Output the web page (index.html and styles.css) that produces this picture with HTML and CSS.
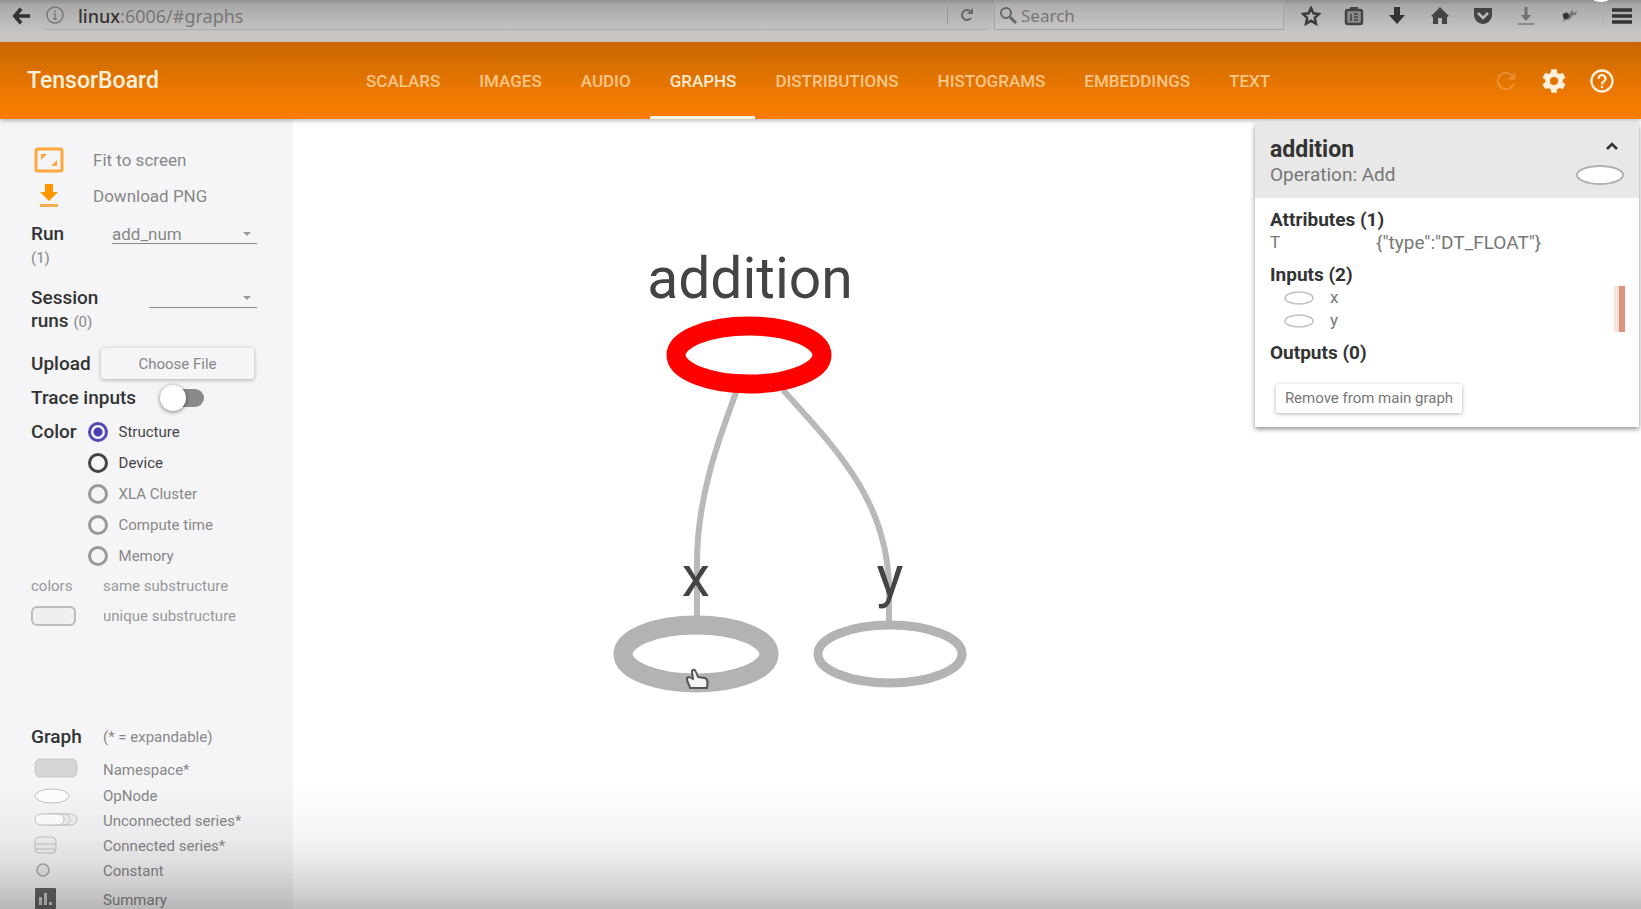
FILE: index.html
```html
<!DOCTYPE html>
<html lang="en">
<head>
<meta charset="utf-8">
<title>TensorBoard</title>
<link rel="stylesheet" href="styles.css">
</head>
<body>
<div class="browser">
  <button class="back" aria-label="Back"><svg width="20" height="18" viewBox="0 0 22 20"><path d="M10 2 3 10l7 8M4 10h16" fill="none" stroke="#333" stroke-width="4"/></svg></button>
  <div class="address">
    <svg width="18" height="18" viewBox="0 0 18 18" fill="none" stroke="#777" stroke-width="1.5"><circle cx="9" cy="9" r="8"/><path d="M9 8v5M7 13h4M7.500 8H9M9 4.500v2"/></svg>
    <span class="url" role="textbox" aria-label="Address"><b>linux</b>:6006/#graphs</span>
    <button class="reload" aria-label="Reload"><svg width="14" height="16" viewBox="0 0 14 16"><path d="M11 11a5 5 0 1 1-1-7" fill="none" stroke="#666" stroke-width="2"/><path d="M13 1v6H7z" fill="#666"/></svg></button>
  </div>
  <label class="search">
    <svg width="18" height="18" viewBox="0 0 18 18" fill="none" stroke="#666" stroke-width="2"><circle cx="7" cy="7" r="5"/><path d="m11 11 6 6" stroke-width="3"/></svg>
    <input type="text" placeholder="Search" aria-label="Search">
  </label>
  <div class="tools">
    <button aria-label="Bookmark"><svg width="20" height="20" viewBox="0 0 20 20"><path d="m10 2 2.400 5.300 5.600.7-4.200 3.900 1.200 5.800-5-2.900-5 2.900 1.200-5.800L2 8l5.600-.7z" fill="none" stroke="#3c3c3c" stroke-width="2.500"/></svg></button>
    <button aria-label="Clipboard"><svg width="20" height="20" viewBox="0 0 20 20"><rect x="2" y="4" width="16" height="14" rx="2" fill="#8a8a8a" stroke="#444" stroke-width="2.500"/><rect x="6" y="1" width="8" height="4" fill="#444"/><path d="M7 8v7M10 8h4M10 11h4M10 14h4" stroke="#444" stroke-width="1.500"/></svg></button>
    <button aria-label="Downloads"><svg width="20" height="20" viewBox="0 0 20 20"><path d="M7 1h6v8h5l-8 9-8-9h5z" fill="#333"/></svg></button>
    <button aria-label="Home"><svg width="20" height="20" viewBox="0 0 20 20"><path d="m10 1 9 9-2 1v7h-5v-6H8v6H3v-7l-2-1z" fill="#444"/></svg></button>
    <button aria-label="Pocket"><svg width="20" height="20" viewBox="0 0 20 20"><path d="M1 2h18v7a9 9 0 0 1-18 0z" fill="#444"/><path d="m5 7 5 5 5-5" fill="none" stroke="#bbb" stroke-width="2.500"/></svg></button>
    <button aria-label="Save"><svg width="20" height="20" viewBox="0 0 20 20"><path d="M8.500 1h3v8H15l-5 6-5-6h3.500z" fill="#707070"/><path d="M2 17h16v2H2z" fill="#8c8c8c"/></svg></button>
    <button aria-label="Extension"><svg width="20" height="20" viewBox="0 0 20 20"><path d="m3 8 5-2 2 2 4-5v4l4-2-1 4h-3l-3 4-4 1-3 2 1-4z" fill="#777"/><circle cx="7" cy="10" r="3" fill="#333"/></svg></button>
    <button class="menu" aria-label="Menu"><svg width="20" height="20" viewBox="0 0 20 20"><path d="M0 4h20M0 10h20M0 16h20" stroke="#333" stroke-width="3.500"/></svg></button>
  </div>
</div>

<header class="bar">
  <h1 class="brand">TensorBoard</h1>
  <nav class="tabs">
    <a href="#scalars">SCALARS</a><a href="#images">IMAGES</a><a href="#audio">AUDIO</a><a href="#graphs" class="on" aria-current="page">GRAPHS</a><a href="#distributions">DISTRIBUTIONS</a><a href="#histograms">HISTOGRAMS</a><a href="#embeddings">EMBEDDINGS</a><a href="#text">TEXT</a>
  </nav>
  <div class="actions">
    <button class="dim" aria-label="Reload data"><svg width="28" height="28" viewBox="0 0 24 24" fill="currentColor"><path d="M17.650 6.350A7.960 7.960 0 0 0 12 4a8 8 0 1 0 7.730 10h-2.080A6 6 0 1 1 12 6c1.660 0 3.140.69 4.220 1.780L13 11h7V4z"/></svg></button>
    <button aria-label="Settings"><svg width="28" height="28" viewBox="0 0 24 24" fill="currentColor"><path d="M19.430 12.980c.04-.32.07-.64.07-.98s-.03-.66-.07-.98l2.110-1.650c.19-.15.24-.42.12-.64l-2-3.460c-.12-.22-.39-.3-.61-.22l-2.490 1c-.52-.4-1.080-.73-1.690-.98l-.38-2.650A.49.49 0 0 0 14 2h-4c-.25 0-.46.18-.49.42l-.38 2.650c-.61.25-1.170.59-1.690.98l-2.490-1c-.23-.09-.49 0-.61.22l-2 3.460c-.13.22-.07.49.12.64l2.110 1.650c-.04.32-.07.65-.07.98s.03.66.07.98l-2.110 1.650c-.19.15-.24.42-.12.64l2 3.460c.12.22.39.3.61.22l2.490-1c.52.4 1.080.73 1.690.98l.38 2.650c.03.24.24.42.49.42h4c.25 0 .46-.18.49-.42l.38-2.650c.61-.25 1.170-.59 1.690-.98l2.490 1c.23.09.49 0 .61-.22l2-3.460c.12-.22.07-.49-.12-.64zM12 15.500a3.500 3.500 0 1 1 0-7 3.500 3.500 0 0 1 0 7z"/></svg></button>
    <button aria-label="Help"><svg width="28" height="28" viewBox="0 0 24 24" fill="currentColor"><path d="M11 18h2v-2h-2zm1-16a10 10 0 1 0 0 20 10 10 0 0 0 0-20zm0 18a8 8 0 1 1 0-16 8 8 0 0 1 0 16zm0-14a4 4 0 0 0-4 4h2a2 2 0 1 1 4 0c0 2-3 1.750-3 5h2c0-2.250 3-2.500 3-5a4 4 0 0 0-4-4z"/></svg></button>
  </div>
</header>

<div class="main">
  <aside class="side">
    <button class="action"><svg width="32" height="30" viewBox="0 0 32 30" fill="none" stroke="#ffa63c"><rect x="3" y="4" width="26" height="22" rx="2" stroke-width="3"/><path d="m8 9 6 0-6 6zM24 21l-6 0 6-6z" fill="#ffa63c" stroke="none"/></svg>Fit to screen</button>
    <button class="action"><svg width="32" height="30" viewBox="0 0 32 30" fill="#ff9800"><path d="M12 3h8v8h5l-9 9-9-9h5z"/><path d="M7 23h18v3H7z" fill="#f3ac50"/></svg>Download PNG</button>

    <div class="field run">
      <label for="run">Run<small>(1)</small></label>
      <span class="drop"><select id="run"><option>add_num</option></select></span>
    </div>
    <div class="field session">
      <label for="session">Session<br>runs <small>(0)</small></label>
      <span class="drop"><select id="session"><option></option></select></span>
    </div>
    <div class="field upload"><span id="upl">Upload</span><button class="choose" aria-describedby="upl">Choose File</button></div>
    <div class="field trace"><label for="trace">Trace inputs</label><input type="checkbox" role="switch" id="trace" class="switch"></div>
    <div class="field color" role="radiogroup" aria-labelledby="colorby">
      <span id="colorby">Color</span>
      <div class="radios">
        <label class="dark"><input type="radio" name="color" checked>Structure</label>
        <label class="dark"><input type="radio" name="color">Device</label>
        <label><input type="radio" name="color">XLA Cluster</label>
        <label><input type="radio" name="color">Compute time</label>
        <label><input type="radio" name="color">Memory</label>
      </div>
    </div>
    <div class="keys">
      <span>colors</span><span>same substructure</span>
      <span class="pill"></span><span>unique substructure</span>
    </div>

    <div class="legend">
      <h2>Graph</h2><span>(* = expandable)</span>
      <svg width="48" height="24" viewBox="0 0 48 24"><rect x="4" y="1" width="42" height="18" rx="5" fill="#d6d6d6" stroke="#c6c6c6"/></svg><span>Namespace*</span>
      <svg width="48" height="20" viewBox="0 0 48 20"><ellipse cx="21" cy="10" rx="17" ry="7" fill="#fff" stroke="#c4c4c4"/></svg><span>OpNode</span>
      <svg width="48" height="20" viewBox="0 0 48 20" fill="#fff" stroke="#c4c4c4"><rect x="18" y="3" width="28" height="11" rx="6" fill="#f0f0f2"/><rect x="11" y="3" width="28" height="11" rx="6" fill="#f0f0f2"/><rect x="4" y="3" width="29" height="11" rx="6"/></svg><span>Unconnected series*</span>
      <svg width="48" height="20" viewBox="0 0 48 20" fill="#f3f3f5" stroke="#c4c4c4"><rect x="4" y="1" width="21" height="16" rx="4"/><path d="M4 8h21M4 13h21"/></svg><span>Connected series*</span>
      <svg width="48" height="20" viewBox="0 0 48 20"><circle cx="12" cy="9" r="6" fill="#ececee" stroke="#aaa" stroke-width="1.500"/></svg><span>Constant</span>
      <svg width="48" height="24" viewBox="0 0 48 24"><rect x="4" y="0" width="21" height="21" rx="1" fill="#666"/><path d="M8 9h3v8H8zM13 5h3v12h-3zM18 14h3v3h-3z" fill="#ccc"/></svg><span>Summary</span>
    </div>
  </aside>

  <main class="canvas">
    <svg class="graph" role="img" aria-label="Graph of the addition operation with inputs x and y">
      <g fill="none" stroke="#b9b9b9" stroke-width="6">
        <path d="M443 273C432 306 404 370 404 444V500"/>
        <path d="M490 271C542 329 596 382 596 472V505"/>
      </g>
      <ellipse cx="456" cy="236" rx="73" ry="29" fill="#fff" stroke="red" stroke-width="19"/>
      <ellipse cx="403" cy="535" rx="73" ry="29" fill="#fff" stroke="#b3b3b3" stroke-width="19"/>
      <ellipse cx="597" cy="535" rx="72" ry="29" fill="#fff" stroke="#b3b3b3" stroke-width="9"/>
      <g class="names"><text x="457" y="179">addition</text><text x="403" y="477">x</text><text x="597" y="477">y</text></g>
      <path d="M397 569c0-3-4-7-3-10 1-1 4-1 6 1l-1-7c0-3 3-3 4 0l2 5 7 1c3 1 3 4 2 10z" fill="#f4f4f4" stroke="#555" stroke-width="2" stroke-linejoin="round"/>
    </svg>
    <section class="card">
      <header class="head">
        <div><h2>addition</h2><p>Operation: Add</p></div>
        <div class="headicons">
          <button aria-label="Collapse"><svg width="14" height="10" viewBox="0 0 14 10"><path d="m2 8 5-5 5 5" fill="none" stroke="#333" stroke-width="2.500"/></svg></button>
          <svg width="50" height="22" viewBox="0 0 50 22"><ellipse cx="25" cy="11" rx="23" ry="9" fill="#fff" stroke="#b0b0b0" stroke-width="2"/></svg>
        </div>
      </header>
      <div class="body">
        <h3>Attributes (1)</h3>
        <dl><dt>T</dt><dd>{"type":"DT_FLOAT"}</dd></dl>
        <h3>Inputs (2)</h3>
        <div class="inputs">
          <ul>
            <li><svg width="30" height="14" viewBox="0 0 30 14"><ellipse cx="15" cy="7" rx="14" ry="6" fill="#fff" stroke="#c2c2c2" stroke-width="1.500"/></svg>x</li>
            <li><svg width="30" height="14" viewBox="0 0 30 14"><ellipse cx="15" cy="7" rx="14" ry="6" fill="#fff" stroke="#c2c2c2" stroke-width="1.500"/></svg>y</li>
          </ul>
          <span class="mark"></span>
        </div>
        <h3>Outputs (0)</h3>
        <button class="remove">Remove from main graph</button>
      </div>
    </section>
  </main>
</div>
<div class="shade"></div>
<div class="knob"></div>
</body>
</html>
```

FILE: styles.css
```css
* { box-sizing: border-box; }
body {
  margin: 0;
  height: 100vh;
  overflow: hidden;
  display: flex;
  flex-direction: column;
  font: 17px/20px Roboto, sans-serif;
  color: #333;
  background: #fff;
}
h1, h2, h3, p, ul, dl, dd { margin: 0; padding: 0; }
h1, h2, h3 { font-weight: 500; }
button { font: inherit; color: inherit; background: none; border: 0; padding: 0; }
svg { display: block; flex: none; }

.browser {
  flex: none;
  height: 42px;
  padding: 0 8px 0 6px;
  display: flex;
  align-items: flex-start;
  gap: 8px;
  background: linear-gradient(#8f8f8f, #a9a9a8 5px, #c6c4c4 32px, #cdc5c2);
  font-family: "Open Sans", sans-serif;
}
.back { height: 32px; width: 32px; display: grid; place-items: center; }
.address, .search {
  height: 30px;
  display: flex;
  align-items: center;
  border-bottom: 1px solid #aaa;
}
.address { flex: 1; gap: 14px; }
.url { flex: 1; padding-top: 2px; color: #777; font: 18px/20px "Noto Sans", sans-serif; }
.url b { font-weight: 500; color: #333; }
.reload { border-left: 1px solid #999; padding: 1px 12px; height: 18px; }
.search { width: 290px; gap: 4px; border: 1px solid #a5a5a5; border-top: 0; padding-left: 4px; background: rgba(255, 255, 255, .08); }
.search input { width: 200px; border: 0; background: none; font: 17px/20px "Noto Sans", sans-serif; color: #666; padding: 2px 0 0; outline: 0; }
.search input::placeholder { color: #777; opacity: 1; }
.tools { display: flex; gap: 23px; padding: 6px 1px 0 9px; }
.menu { border-left: 1px solid #b2b2b2; padding-left: 9px; }

.bar {
  flex: none;
  height: 77px;
  padding: 0 25px 0 27px;
  display: flex;
  align-items: center;
  background: linear-gradient(#c76705, #da7000 25px, #f07900 57px, #fc7c00);
  z-index: 2;
  box-shadow: 0 2px 4px rgba(0, 0, 0, .25);
  color: #fff0dc;
}
.brand { width: 319px; font-size: 23px; line-height: 28px; }
.tabs { display: flex; align-self: stretch; flex: 1; font-weight: 500; }
.tabs a { display: flex; align-items: center; padding: 0 19px 0 20px; color: #fbc688; text-decoration: none; border-bottom: 3px solid transparent; border-top: 3px solid transparent; }
.tabs .on { color: #ffe9cf; border-bottom-color: #fff3e0; }
.actions { display: flex; gap: 20px; }
.dim { opacity: .2; }

.main { flex: 1; min-height: 0; display: flex; }
.side {
  flex: none;
  width: 293px;
  padding: 26px 36px 0 31px;
  overflow: hidden;
  background: #f5f5f7;
}
.action { display: flex; align-items: center; gap: 28px; height: 30px; margin: 0 0 6px 2px; color: #888; }
.field { display: flex; justify-content: space-between; font-size: 19px; font-weight: 500; line-height: 24px; }
.field small { font-size: 15px; font-weight: 400; color: #888; }
.run { height: 69px; padding-top: 5px; }
.run small { display: block; }
.drop { position: relative; width: 145px; height: 22px; border-bottom: 1px solid #8b8b8b; }
.session .drop { width: 108px; }
.drop select { appearance: none; width: 100%; border: 0; background: none; font: 17px/20px Roboto, sans-serif; color: #888; padding: 0; }
.drop::after { content: ""; position: absolute; right: 6px; top: 10px; border: 4px solid transparent; border-top-color: #999; border-bottom: 0; }
.session { height: 60px; }
.session label { line-height: 23px; }
.upload { align-items: center; height: 35px; }
.choose { width: 153px; height: 31px; margin-right: 3px; font-size: 15px; font-weight: 400; color: #888; border-radius: 3px; box-shadow: 0 1px 4px rgba(0, 0, 0, .3); }
.trace { align-items: center; height: 34px; justify-content: flex-start; gap: 24px; }
.switch { appearance: none; position: relative; margin: 0; width: 44px; height: 18px; border-radius: 9px; background: linear-gradient(90deg, transparent 14px, #8a8a8a 14px); }
.switch::before { content: ""; position: absolute; left: 0; top: -4px; width: 26px; height: 26px; border-radius: 50%; background: #fff; box-shadow: 0 1px 4px rgba(0, 0, 0, .5); }
.color { justify-content: flex-start; gap: 11px; padding-top: 1px; line-height: 32px; }
.radios label { display: flex; align-items: center; gap: 11px; height: 31px; font-size: 15px; font-weight: 400; color: #888; }
.radios .dark { color: #444; }
.radios input { appearance: none; margin: 0; width: 20px; height: 20px; border: 3px solid #999; border-radius: 50%; }
.radios .dark input { border-color: #444; }
.radios .dark input:checked { border-color: #5548b8; background: radial-gradient(#4a3fb0 4px, transparent 5px); }
.keys { display: grid; grid-template-columns: 72px 1fr; line-height: 30px; font-size: 15px; color: #999; align-items: center; white-space: nowrap; }
.pill { width: 45px; height: 20px; border: 2px solid #bbb; border-radius: 6px; background: #efeff0; }
.legend { margin-top: 87px; display: grid; grid-template-columns: 72px 1fr; grid-template-rows: 38px 27px repeat(4, 25px) 33px; align-items: center; font-size: 15px; color: #888; white-space: nowrap; }
.legend h2 { font-size: 19px; color: #333; }

.canvas { flex: 1; position: relative; min-width: 0; }
.graph { width: 100%; height: 100%; }
.names { font: 57px Roboto, sans-serif; fill: #444; text-anchor: middle; }
.card {
  position: absolute;
  top: 5px;
  right: 2px;
  width: 384px;
  background: #fff;
  box-shadow: 0 2px 5px rgba(0, 0, 0, .45);
}
.head { display: flex; justify-content: space-between; padding: 13px 14px 11px 15px; line-height: 25px; background: #e8e8e8; color: #777; }
.head h2 { font-size: 23px; line-height: 25px; color: #333; }
.head p { font-size: 19px; }
.headicons { display: flex; flex-direction: column; align-items: flex-end; gap: 13px; padding-top: 4px; }
.headicons button { margin-right: 6px; }
.body { padding: 11px 14px 14px 15px; color: #777; line-height: 23px; }
.body h3 { font-size: 19px; line-height: 22px; color: #333; }
.head h2, .body h3 { font-weight: 700; }
.body dl { display: grid; grid-template-columns: 106px 1fr; margin-bottom: 10px; }
.body dd { font-size: 19px; }
.inputs { display: flex; justify-content: space-between; margin-bottom: 10px; }
.body ul { list-style: none; padding-left: 14px; }
.body li { display: flex; align-items: center; gap: 16px; }
.mark { width: 11px; background: linear-gradient(90deg, #f8e3da 5px, #e0907c 5px); }
.remove { display: block; margin: 20px 0 0 6px; width: 186px; height: 29px; font-size: 15px; border-radius: 2px; box-shadow: 0 1px 4px rgba(0, 0, 0, .3); }

.shade { position: fixed; inset: auto 0 0; height: 125px; pointer-events: none; z-index: 3; background: linear-gradient(transparent, rgba(0, 0, 0, .04) 42%, rgba(0, 0, 0, .09) 62%, rgba(0, 0, 0, .16) 81%, rgba(0, 0, 0, .25)); }
.knob { position: fixed; top: -22px; right: 26px; width: 28px; height: 24px; border-radius: 50%; background: #fff; z-index: 3; }
```
